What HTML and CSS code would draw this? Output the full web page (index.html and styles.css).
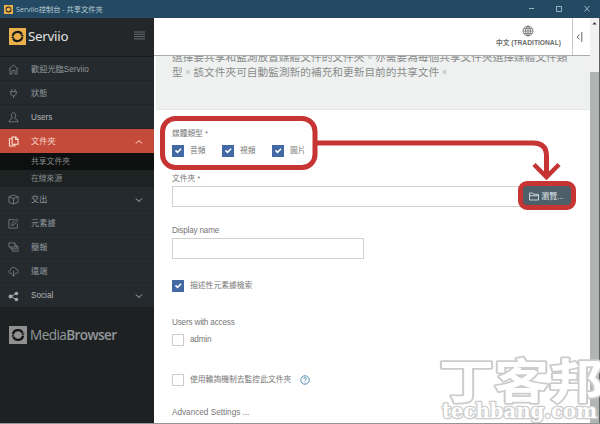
FILE: index.html
```html
<!DOCTYPE html>
<html lang="zh-Hant">
<head>
<meta charset="utf-8">
<title>Serviio控制台 - 共享文件夾</title>
<link rel="stylesheet" href="styles.css">
</head>
<body>
<svg class="defs" width="0" height="0">
  <symbol id="mark" viewBox="0 0 18 18"><path class="tile" d="M0 0h18v18H0z"/><path d="M3.900 8.300A5.200 5 0 0 1 13.700 6.900M14.100 9.700A5.200 5 0 0 1 4.300 11.100" fill="none" stroke="#171a1b" stroke-width="2.200"/><path d="M12.200 7.400h3.600l-1.700 2zM2.200 10.600l1.700-2 1.900 2z" fill="#171a1b"/></symbol>
  <symbol id="check" viewBox="0 0 12 12"><path d="m3.500 5.400 2 2 3.600-3.600" fill="none" stroke="#fff" stroke-width="1.500"/></symbol>
</svg>
<header class="titlebar">
  <svg class="title-mark"><use href="#mark"/></svg>
  <span class="title">Serviio控制台 - 共享文件夾</span>
  <svg class="winbtns" viewBox="0 0 70 18"><path d="M1 8.500h5M28.500 6.500h5v5h-5zM56.500 6l5 5.500m0-5.500-5 5.500"/></svg>
</header>
<div class="shell">
  <nav class="sidebar">
    <div class="brand">
      <svg class="brand-mark"><use href="#mark"/></svg>
      <span class="brand-name">Serviio</span>
      <svg class="burger" viewBox="0 0 11 9"><path d="M0 1h11M0 3.300h11M0 5.600h11M0 7.900h11"/></svg>
    </div>
    <a class="item"><svg class="icon" viewBox="0 0 12 12"><path d="M1 5.600 6 1l5 4.600M2.200 5v6h2.300V7h3v4h2.300V5"/></svg>歡迎光臨Serviio</a>
    <a class="item"><svg class="icon" viewBox="0 0 12 12"><path d="M4.300 1v2.700M7.700 1v2.700M2 4h8M3 4v1.600c0 4 6 4 6 0V4M6 8.700V11"/></svg>狀態</a>
    <a class="item light"><svg class="icon" viewBox="0 0 12 12"><path d="M6 1c-2 0-2.600 1.400-2.200 3.300.2 1 .7 1.700 1.200 2.200-.2 1.200-3.600 1-4 4.200h10c-.4-3.200-3.800-3-4-4.200.5-.5 1-1.200 1.200-2.200C8.600 2.400 8 1 6 1z"/></svg>Users</a>
    <a class="item active"><svg class="icon" viewBox="0 0 12 12"><path d="M4.500 1h4L11 3.500V9H4.500zM8.300 1v2.800H11M4.300 3H1.500v7.800h6V9.200"/></svg>文件夾<svg class="chev" viewBox="0 0 8 6"><path d="m1 4.500 3-3 3 3"/></svg></a>
    <div class="sub"><a class="current">共享文件夾</a><a>在線來源</a></div>
    <a class="item"><svg class="icon" viewBox="0 0 12 12"><path d="m6 1 5 2v6l-5 2-5-2V3zM1 3l5 2 5-2M6 5v6"/></svg>交出<svg class="chev" viewBox="0 0 8 6"><path d="m1 1.500 3 3 3-3"/></svg></a>
    <a class="item"><svg class="icon" viewBox="0 0 12 12"><path d="M7 1.800H1V11h9.300V6M4 8.200l.6-2.400L9.300 1 11 2.700 6.300 7.500z"/></svg>元素據</a>
    <a class="item"><svg class="icon" viewBox="0 0 12 12"><path d="M1 1h6.500v4.500H1zM7.500 3H9v4.500H3v-2M9 5h2v5H5V7.500"/></svg>簡報</a>
    <a class="item"><svg class="icon" viewBox="0 0 12 12"><path d="M4.500 8H3C.3 8 .3 4.600 2.600 4.500 3 .8 8 .8 8.800 3.500 12 3.600 12 8 9 8H7.500M6 5v6M4.300 9.400 6 11l1.700-1.600"/></svg>遠端</a>
    <a class="item light last"><svg class="icon share" viewBox="0 0 12 12"><path d="M9 2.800 3 6l6 3.200"/><circle cx="9.200" cy="2.700" r="2"/><circle cx="2.800" cy="6" r="2.200"/><circle cx="9.200" cy="9.300" r="2"/></svg>Social<svg class="chev" viewBox="0 0 8 6"><path d="m1 1.500 3 3 3-3"/></svg></a>
    <div class="media"><svg class="media-mark"><use href="#mark"/></svg><span class="media-name">Media<b>Browser</b></span></div>
  </nav>
  <main class="main">
    <div class="topbar">
      <div class="language"><svg viewBox="0 0 12 12"><path d="M6 1a5 5 0 1 0 0 10A5 5 0 0 0 6 1zM6 1C2.700 3.500 2.700 8.500 6 11c3.300-2.500 3.300-7.500 0-10zM6 1v10M1 6h10M1.700 3.600h8.600M1.700 8.400h8.600"/></svg><span>中文 (TRADITIONAL)</span></div>
      <div class="collapse"><svg viewBox="0 0 8 12"><path d="M3.500 3.500 1.200 6l2.300 2.500M5.800 1v10"/></svg></div>
    </div>
    <section class="intro"><p>選擇要共享和監測放置媒體文件的文件夾。亦需要為每個共享文件夾選擇媒體文件類<br>型。該文件夾可自動監測新的補充和更新目前的共享文件。</p></section>
    <form class="form">
      <div class="label">媒體類型 *</div>
      <div class="checks">
        <span class="check"><i class="box on"><svg><use href="#check"/></svg></i>音頻</span>
        <span class="check"><i class="box on"><svg><use href="#check"/></svg></i>視頻</span>
        <span class="check"><i class="box on"><svg><use href="#check"/></svg></i>圖片</span>
      </div>
      <div class="label folder-label">文件夾 *</div>
      <div class="folder"><div class="input"></div><div class="browse"><svg viewBox="0 0 10 9"><path d="M.5 8V1h3.300l1 1.300H9.500V8zM.5 3.700h9"/></svg>瀏覽...</div></div>
      <div class="label name-label">Display name</div>
      <div class="input name"></div>
      <div class="check describe"><i class="box on"><svg><use href="#check"/></svg></i>描述性元素據檢索</div>
      <div class="label access">Users with access</div>
      <div class="check admin"><i class="box"></i>admin</div>
      <div class="check poll"><i class="box"></i>使用輪詢機制去監控此文件夾<svg class="help" viewBox="0 0 10 10"><circle cx="5" cy="5" r="4.200"/><path d="M3.700 4c0-1.800 2.700-1.800 2.700 0C6.400 5 5 4.800 5 6M5 6.800v.8"/></svg></div>
      <div class="label advanced">Advanced Settings ...</div>
    </form>
  </main>
  <aside class="scrollbar"><svg viewBox="0 0 9 10"><path d="M2.300 6.500 4.500 4l2.200 2.500z"/></svg><div class="thumb"></div></aside>
</div>
<svg class="overlay" viewBox="0 0 600 424">
  <g class="watermark">
    <text class="cjk" x="439" y="398" textLength="165" lengthAdjust="spacingAndGlyphs">丁客邦</text>
    <text class="latin" x="442" y="418" textLength="155" lengthAdjust="spacingAndGlyphs">techbang.com</text>
  </g>
  <g class="annotation">
    <rect x="162.500" y="118.500" width="152.500" height="49" rx="13"/>
    <path d="M317 143H533Q546.500 143 546.500 156V175"/>
    <path class="arrow" d="m534 164.500 12.500 12.500 12.500-12.500"/>
    <rect x="520.500" y="183.500" width="53" height="24" rx="6.500"/>
  </g>
</svg>
</body>
</html>
```
FILE: styles.css
```css
* { box-sizing: border-box; }
body { margin: 0; width: 600px; height: 424px; overflow: hidden; background: #fff; color: #777; font: 8.2px/12px "Liberation Sans", "Noto Sans CJK TC", sans-serif; }
svg { display: block; flex: none; }
.defs { position: absolute; }
.tile { fill: #e9b04c; }
.titlebar { height: 18px; display: flex; align-items: center; padding: 0 10px 0 4px; background: #244a63; color: #b9cad4; }
.title-mark { width: 9px; height: 9px; margin-right: 3px; }
.title { flex: 1; font-family: "Open Sans", "Noto Sans CJK TC", sans-serif; font-size: 7.25px; }
.winbtns { width: 70px; height: 18px; margin-right: -8px; fill: none; stroke: #b9cbd5; stroke-width: .8; }
.shell { display: flex; height: 406px; border-bottom: 1px solid #929796; }
.sidebar { width: 154px; flex: none; background: #1e2122; }
.brand { display: flex; align-items: center; height: 39px; padding: 0 9px; background: #23272a; border-bottom: 1px solid #191c1e; }
.brand-mark { width: 17px; height: 17px; margin-top: -2px; }
.brand-name { flex: 1; margin: -3px 0 0 2px; color: #e1e2e2; font: 13.3px/18px "Noto Sans", sans-serif; letter-spacing: -.25px; }
.burger { width: 11px; height: 9px; margin-top: -3px; stroke: #656c70; stroke-width: 1; }
.item { display: flex; align-items: center; height: 24px; padding: 2px 11px 0 8px; background: #252a2e; border-bottom: 1px solid #202528; color: #92999d; }
.light { color: #b2b7b9; }
.icon { width: 11px; height: 11px; margin-right: 12px; fill: none; stroke: #878f94; stroke-width: .8; }
.share path { stroke: #a0a6aa; stroke-width: 1; }
.share circle { fill: #a0a6aa; stroke: none; }
.chev { width: 8px; height: 6px; margin-left: auto; fill: none; stroke: #b5babc; stroke-width: 1; }
.active { background: #c44a39; border-color: #c44a39; color: #f5d8cf; }
.active .icon, .active .chev { stroke: #ffe7dc; }
.active .icon { stroke-width: 1.1; }
.sub { background: #1d2223; color: #858b8b; }
.sub a { display: block; height: 17px; padding-left: 31px; font-size: 7.8px; line-height: 18px; }
.sub .current { background: #0d100f; }
.last { border: 0; }
.media { display: flex; align-items: center; height: 56px; padding-left: 9px; }
.media-mark { width: 18px; height: 18px; filter: grayscale(1) brightness(.8); }
.media-name { margin-left: 3px; color: #92989b; font: 13.6px/20px "Open Sans", sans-serif; letter-spacing: -.6px; white-space: nowrap; }
.media-name b { font-weight: 600; }
.main { width: 436px; flex: none; overflow: hidden; }
.topbar { display: flex; justify-content: flex-end; height: 38px; border-bottom: 1px solid #aaacaa; }
.language { display: flex; flex-direction: column; align-items: center; padding-top: 7px; margin-right: 11px; color: #6b6b6b; font-size: 6.7px; font-weight: bold; line-height: 12px; }
.language span { white-space: nowrap; }
.language svg { width: 12px; height: 12px; fill: none; stroke: #6b6b6b; stroke-width: .8; }
.collapse { width: 18px; border-left: 1px solid #c9c9c9; padding: 13px 0 0 3px; }
.collapse svg { width: 8px; height: 12px; fill: none; stroke: #666; stroke-width: 1; }
.intro { height: 54px; margin-left: 2px; padding-left: 16px; overflow: hidden; background: #eff1f0; border-bottom: 1px solid #e4e7e6; }
.intro p { margin: -7px 0 0; color: #8a8c8b; font: 10.7px/15px "Noto Sans CJK TC", sans-serif; white-space: nowrap; }
.form { padding: 17px 16px 0 18px; }
.label { height: 12px; font-size: 7.7px; line-height: 13px; }
.checks { display: flex; margin-top: 6px; }
.check { display: flex; align-items: center; height: 12px; }
.checks .check { width: 50px; font-size: 7.7px; }
.box { width: 12px; height: 12px; flex: none; margin-right: 6px; border: 1px solid #ccc; }
.box svg { width: 12px; height: 12px; }
.box.on { border: 0; background: #4369a5; }
.folder-label { margin-top: 15px; }
.folder { display: flex; align-items: center; margin-top: 2px; }
.input { height: 21px; flex: 1; border: 1px solid #d0d1d0; }
.folder .input { border-right: 0; }
.browse { display: flex; align-items: center; justify-content: center; gap: 2px; width: 51px; height: 21px; margin-right: 2px; background: #4d6069; color: #e2e8e9; font-size: 8px; }
.browse svg { width: 10px; height: 9px; fill: none; stroke: #d5dfe1; stroke-width: .9; }
.name-label { margin-top: 17px; font-size: 8.2px; letter-spacing: -.2px; }
.name { width: 192px; margin-top: 2px; }
.describe { margin-top: 21px; font-size: 7.8px; }
.access { margin-top: 24px; font-size: 8.2px; letter-spacing: -.2px; }
.admin { margin-top: 6px; font-size: 8.2px; letter-spacing: -.2px; }
.poll { margin-top: 28px; font-size: 7.8px; }
.help { width: 10px; height: 10px; margin-left: 9px; fill: none; stroke: #4681ae; stroke-width: .9; }
.advanced { margin-top: 20px; font-size: 8.2px; }
.scrollbar { width: 10px; display: flex; flex-direction: column; background: #f0f1f0; border-right: 1px solid #5a6262; }
.scrollbar svg { width: 9px; height: 10px; fill: #444; }
.thumb { flex: 1; margin-top: 44px; background: #b0b5b4; }
.overlay { position: absolute; left: 0; top: 0; width: 600px; height: 424px; pointer-events: none; }
.annotation { fill: none; stroke: #c63434; stroke-width: 5; }
.annotation .arrow { stroke-width: 4.500; }
.watermark { fill: #fff; stroke: #cbcccb; stroke-width: 3.500; stroke-linejoin: round; paint-order: stroke; }
.cjk { font: 700 47px "Noto Sans CJK TC", sans-serif; }
.latin { font: bold 20px "DejaVu Serif", serif; stroke-width: 2.600; }
```
